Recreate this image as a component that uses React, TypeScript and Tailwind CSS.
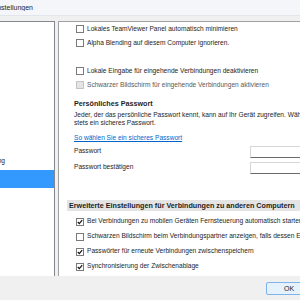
import React from "react";

type CheckRowProps = {
  label: string;
  checked?: boolean;
  disabled?: boolean;
  className?: string;
};

function CheckBox(props: Readonly<{ checked?: boolean; disabled?: boolean }>) {
  const { checked, disabled } = props;
  return (
    <span
      className={
        disabled
          ? "flex h-[8px] w-[8px] shrink-0 items-center justify-center border border-[#c4c4c4] bg-[#e4e4e4]"
          : "flex h-[8px] w-[8px] shrink-0 items-center justify-center border border-[#7a7a7a] bg-white"
      }
    >
      {checked && (
        <svg width="6" height="6" viewBox="0 0 6 6">
          <path d="M0.8 3 L2.3 4.6 L5.2 1.2" fill="none" stroke="#111" strokeWidth="1.2" />
        </svg>
      )}
    </span>
  );
}

function CheckRow(props: Readonly<CheckRowProps>) {
  const { label, checked, disabled, className } = props;
  return (
    <div className={`flex items-center gap-[3px] whitespace-nowrap pl-[17px] ${className ?? "h-[14px]"}`}>
      <CheckBox checked={checked} disabled={disabled} />
      <span className={disabled ? "text-[#5a5a5a]" : "text-[#1e1e1e]"}>{label}</span>
    </div>
  );
}

function PasswordRow(props: Readonly<{ label: string }>) {
  return (
    <div className="flex h-[13px] items-center justify-between">
      <span className="pl-[15px]">{props.label}</span>
      <div className="-mr-[8px] h-[12px] w-[58px] shrink-0 border border-b-[#6a6a6a] border-[#d6d6d6] bg-white" />
    </div>
  );
}

export default function App() {
  return (
    <div
      className="flex h-[300px] w-[300px] flex-col overflow-hidden bg-[#f0f0f0] text-[6.6px] leading-none text-[#1e1e1e]"
      style={{ fontFamily: '"Liberation Sans", Arial, sans-serif' }}
    >
      <div className="flex h-[16px] shrink-0 items-center border-b border-[#e2e5ea] bg-[#f4f6f9]">
        <div className="flex w-[33px] justify-end overflow-hidden whitespace-nowrap text-[7px]">
          Erweiterte Einstellungen
        </div>
      </div>

      <div className="flex min-h-0 flex-1 pt-[5px]">
        <div className="flex w-[55px] shrink-0 flex-col overflow-hidden border-r border-t border-[#828790] bg-white">
          <div className="h-[130px] shrink-0" />
          <div className="flex h-[18px] shrink-0 items-center justify-end overflow-hidden whitespace-nowrap pr-[49px]">
            Fernsteuerung
          </div>
          <div className="h-[18px] shrink-0 bg-[#3399ff]" />
        </div>

        <div className="ml-[3px] flex min-w-0 flex-1 flex-col overflow-hidden border-l border-t border-[#a0a0a0] bg-white">
          <CheckRow label="Lokales TeamViewer Panel automatisch minimieren" />
          <CheckRow label="Alpha Blending auf diesem Computer ignorieren." />
          <div className="h-[14px] shrink-0" />
          <CheckRow label="Lokale Eingabe für eingehende Verbindungen deaktivieren" />
          <CheckRow label="Schwarzer Bildschirm für eingehende Verbindungen aktivieren" disabled />

          <div className="mt-[5px] flex h-[14px] items-center whitespace-nowrap pl-[15px] text-[7.2px] font-bold">
            Persönliches Passwort
          </div>
          <div className="pl-[15px] leading-[8px]">
            <div className="whitespace-nowrap">
              Jeder, der das persönliche Passwort kennt, kann auf Ihr Gerät zugreifen. Wählen Sie
            </div>
            <div className="whitespace-nowrap">stets ein sicheres Passwort.</div>
          </div>
          <div className="mt-[5px] flex h-[12px] items-center whitespace-nowrap pl-[15px]">
            <span className="text-[#0066cc] underline">So wählen Sie ein sicheres Passwort</span>
          </div>
          <div className="mt-[1px] flex flex-col gap-[3px]">
            <PasswordRow label="Passwort" />
            <PasswordRow label="Passwort bestätigen" />
          </div>

          <div className="ml-[8px] mt-[26px] flex h-[11px] shrink-0 items-center whitespace-nowrap bg-[#e4e4e4] pl-[2px] text-[7.2px] font-bold">
            Erweiterte Einstellungen für Verbindungen zu anderen Computern
          </div>
          <div className="mt-[3px] flex flex-col">
            <CheckRow className="h-[15px]" checked label="Bei Verbindungen zu mobilen Geräten Fernsteuerung automatisch starten" />
            <CheckRow className="h-[15px]" label="Schwarzen Bildschirm beim Verbindungspartner anzeigen, falls dessen Eingabe deaktiviert ist" />
            <CheckRow className="h-[15px]" checked label="Passwörter für erneute Verbindungen zwischenspeichern" />
            <CheckRow className="h-[15px]" checked label="Synchronisierung der Zwischenablage" />
          </div>
        </div>
      </div>

      <div className="flex h-[24px] shrink-0 items-center justify-end">
        <button className="-mr-[12px] flex h-[13px] w-[46px] items-center justify-center rounded-[2px] border border-[#7eb4ea] bg-[#e5f1fb] text-[7px] text-[#1e1e1e]">
          OK
        </button>
      </div>
    </div>
  );
}
